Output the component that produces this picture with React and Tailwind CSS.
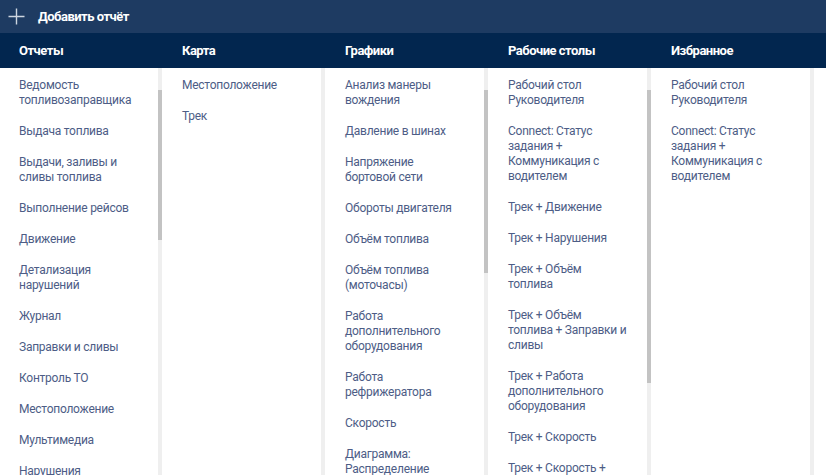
import React from 'react';

// Колонки меню отчётов
const columns = [
  {
    title: 'Отчеты',
    thumb: { top: 22, height: 150 },
    items: [
      'Ведомость\nтопливозаправщика',
      'Выдача топлива',
      'Выдачи, заливы и\nсливы топлива',
      'Выполнение рейсов',
      'Движение',
      'Детализация\nнарушений',
      'Журнал',
      'Заправки и сливы',
      'Контроль ТО',
      'Местоположение',
      'Мультимедиа',
      'Нарушения',
      'Отчёт по водителям',
    ],
  },
  {
    title: 'Карта',
    thumb: null,
    items: ['Местоположение', 'Трек'],
  },
  {
    title: 'Графики',
    thumb: { top: 22, height: 183 },
    items: [
      'Анализ манеры\nвождения',
      'Давление в шинах',
      'Напряжение\nбортовой сети',
      'Обороты двигателя',
      'Объём топлива',
      'Объём топлива\n(моточасы)',
      'Работа\nдополнительного\nоборудования',
      'Работа\nрефрижератора',
      'Скорость',
      'Диаграмма:\nРаспределение\nскорости',
    ],
  },
  {
    title: 'Рабочие столы',
    thumb: { top: 22, height: 293 },
    items: [
      'Рабочий стол\nРуководителя',
      'Connect: Статус\nзадания +\nКоммуникация с\nводителем',
      'Трек + Движение',
      'Трек + Нарушения',
      'Трек + Объём\nтоплива',
      'Трек + Объём\nтоплива + Заправки и\nсливы',
      'Трек + Работа\nдополнительного\nоборудования',
      'Трек + Скорость',
      'Трек + Скорость +\nНарушения',
    ],
  },
  {
    title: 'Избранное',
    thumb: null,
    items: [
      'Рабочий стол\nРуководителя',
      'Connect: Статус\nзадания +\nКоммуникация с\nводителем',
    ],
  },
];

function PlusIcon() {
  return (
    <svg width="17" height="17" viewBox="0 0 17 17" className="shrink-0">
      <path d="M8.5 0.5v16M0.5 8.5h16" stroke="#cdd5e0" strokeWidth="1.4" fill="none" />
    </svg>
  );
}

function Column({ col }) {
  return (
    <div className="w-[163px] shrink-0 flex h-full">
      <div className="w-[158px] shrink-0 pt-[2px] overflow-hidden">
        {col.items.map((item, i) => (
          <div
            key={i}
            className="pl-[19px] py-[8px] text-[12px] leading-[15px] tracking-[-0.25px] text-[#4d5d86] whitespace-pre-line cursor-pointer hover:text-[#1e3b63]"
          >
            {item}
          </div>
        ))}
      </div>
      {/* scrollbar track */}
      <div className="w-[4px] shrink-0 h-full bg-[#efefef]">
        {col.thumb && (
          <div
            className="w-full bg-[#c3c3c3]"
            style={{ marginTop: col.thumb.top, height: col.thumb.height }}
          />
        )}
      </div>
    </div>
  );
}

export default function App() {
  return (
    <div
      className="w-[826px] h-[475px] overflow-hidden bg-white flex flex-col"
      style={{ fontFamily: 'Roboto, "Liberation Sans", sans-serif' }}
    >
      {/* Add report bar */}
      <div className="h-[33px] shrink-0 bg-[#1e3b62] flex items-center pl-[8px] gap-[13px]">
        <PlusIcon />
        <span className="text-white font-bold text-[13px] tracking-[-0.5px]">Добавить отчёт</span>
      </div>

      {/* Column headers */}
      <div className="h-[35px] shrink-0 bg-[#02264f] flex items-center">
        {columns.map((col) => (
          <div key={col.title} className="w-[163px] shrink-0 pl-[19px] text-white font-bold text-[13px] tracking-[-0.5px]">
            {col.title}
          </div>
        ))}
      </div>

      {/* Columns */}
      <div className="flex-1 flex min-h-0">
        {columns.map((col) => (
          <Column key={col.title} col={col} />
        ))}
      </div>
    </div>
  );
}
